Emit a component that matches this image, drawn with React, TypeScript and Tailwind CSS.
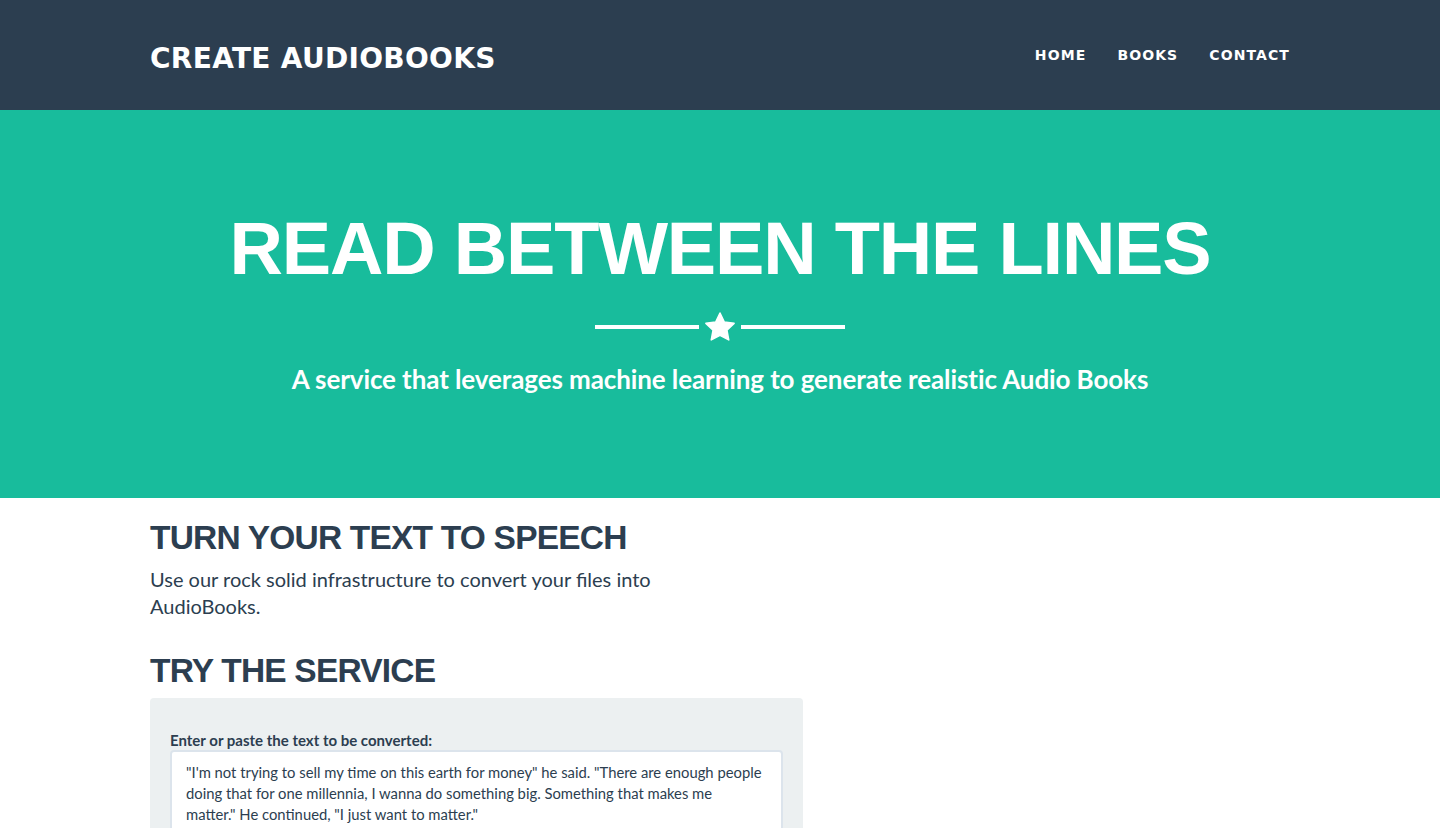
import React from "react";

const heading = { fontFamily: '"DejaVu Sans", "Noto Sans", sans-serif' };
const heading2 = { fontFamily: '"Liberation Sans", Arial, sans-serif' };

function Star() {
  return (
    <svg width="32" height="30" viewBox="0 0 24 23" className="mx-[5px]">
      <path
        d="M12 0.8l3.3 6.9 7.5 1-5.5 5.2 1.4 7.5L12 17.8l-6.7 3.6 1.4-7.5L1.2 8.7l7.5-1z"
        fill="#fff"
        stroke="#fff"
        strokeWidth="1.2"
        strokeLinejoin="round"
      />
    </svg>
  );
}

export default function App() {
  return (
    <div className="min-h-screen bg-white" style={{ fontFamily: 'Lato, "Open Sans", sans-serif' }}>
      <nav className="bg-[#2c3e50] h-[110px]">
        <div className="w-[1140px] mx-auto h-full flex items-center justify-between">
          <a className="text-white text-[28px] font-bold leading-none tracking-[0.3px] pt-[7px]" style={heading}>
            CREATE AUDIOBOOKS
          </a>
          <ul className="flex items-center gap-[31px] text-white text-[14px] font-bold tracking-[1.1px] pt-[1px]" style={heading}>
            <li>HOME</li>
            <li>BOOKS</li>
            <li>CONTACT</li>
          </ul>
        </div>
      </nav>

      <header className="bg-[#18bc9c] h-[388px] flex flex-col items-center text-white">
        <h1 className="mt-[102px] text-[74px] font-bold leading-none tracking-[-1.2px]" style={heading2}>
          READ BETWEEN THE LINES
        </h1>
        <div className="flex items-center mt-[26px]">
          <div className="w-[104px] h-[4px] bg-white" />
          <Star />
          <div className="w-[104px] h-[4px] bg-white" />
        </div>
        <p className="mt-[24px] text-[26px] font-bold leading-none tracking-[-0.1px]">
          A service that leverages machine learning to generate realistic Audio Books
        </p>
      </header>

      <section className="w-[1140px] mx-auto text-[#2c3e50]">
        <h2 className="mt-[23px] text-[33.5px] font-bold leading-none tracking-[-0.8px]" style={heading2}>
          TURN YOUR TEXT TO SPEECH
        </h2>
        <p className="w-[555px] mt-[11px] text-[20px] leading-[27px]">
          Use our rock solid infrastructure to convert your files into AudioBooks.
        </p>
        <h2 className="mt-[34px] text-[33.5px] font-bold leading-none tracking-[-0.8px]" style={heading2}>
          TRY THE SERVICE
        </h2>
        <div className="mt-[11px] w-[653px] bg-[#ecf0f1] rounded-[4px] px-[20px] pt-[32px] pb-[20px]">
          <label className="block text-[15px] font-bold leading-[20px]">
            Enter or paste the text to be converted:
          </label>
          <div className="bg-white border-2 border-[#dce4ec] rounded-[4px] px-[14px] pt-[10px] pb-[10px] text-[14.8px] leading-[21px] text-[#2c3e50] whitespace-nowrap">
            "I'm not trying to sell my time on this earth for money" he said. "There are enough people
            <br />
            doing that for one millennia, I wanna do something big. Something that makes me
            <br />
            matter." He continued, "I just want to matter."
          </div>
        </div>
      </section>
    </div>
  );
}
